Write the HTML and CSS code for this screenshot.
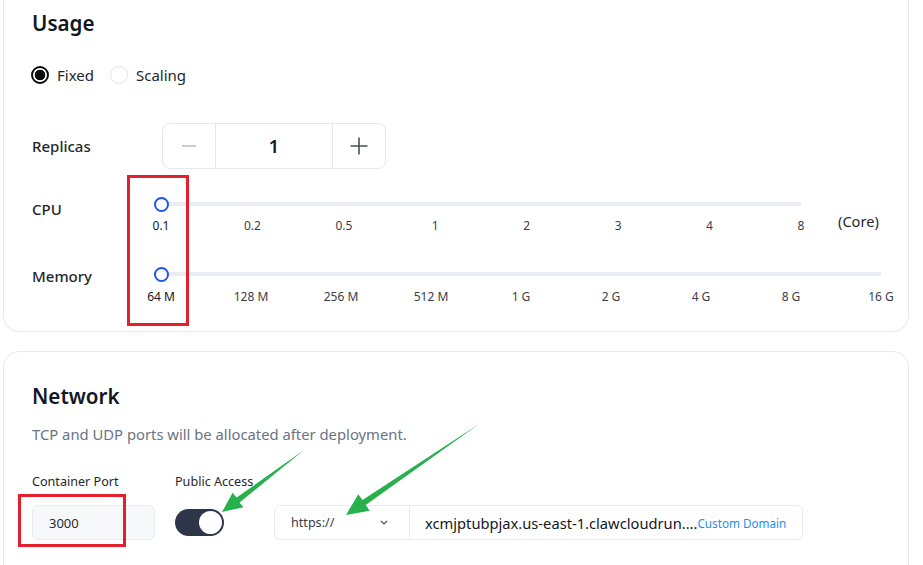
FILE: index.html
```html
<!DOCTYPE html>
<html lang="en">
<head>
<meta charset="utf-8">
<title>Usage &amp; Network</title>
<link rel="stylesheet" href="styles.css">
</head>
<body>
<div class="page">
  <section class="card card--cut">
    <h2 class="card-title">Usage</h2>
    <div class="radios">
      <label class="radio radio--on"><span class="radio-dot"></span><span class="radio-text">Fixed</span></label>
      <label class="radio"><span class="radio-dot"></span><span class="radio-text">Scaling</span></label>
    </div>

    <div class="row row--replicas">
      <span class="row-label">Replicas</span>
      <div class="stepper">
        <span class="step step--minus"><svg width="16" height="4" viewBox="0 0 16 4"><line x1="1" y1="2" x2="15" y2="2" stroke="#c9cdd3" stroke-width="2"/></svg></span>
        <span class="step-value">1</span>
        <span class="step step--plus"><svg width="18" height="18" viewBox="0 0 18 18"><path d="M0.5 9H17.5M9 0.5V17.5" stroke="#4b5058" stroke-width="1.6"/></svg></span>
      </div>
    </div>

    <div class="row row--slider">
      <span class="row-label row-label--cpu">CPU</span>
      <div class="slider slider--cpu">
        <div class="track"><span class="thumb"></span></div>
        <div class="ticks">
          <span class="tick tick--on">0.1</span><span class="tick">0.2</span><span class="tick">0.5</span><span class="tick">1</span><span class="tick">2</span><span class="tick">3</span><span class="tick">4</span><span class="tick">8</span>
        </div>
      </div>
      <span class="unit">(Core)</span>
    </div>

    <div class="row row--slider row--memory">
      <span class="row-label row-label--mem">Memory</span>
      <div class="slider slider--mem">
        <div class="track"><span class="thumb"></span></div>
        <div class="ticks">
          <span class="tick tick--on">64 M</span><span class="tick">128 M</span><span class="tick">256 M</span><span class="tick">512 M</span><span class="tick">1 G</span><span class="tick">2 G</span><span class="tick">4 G</span><span class="tick">8 G</span><span class="tick">16 G</span>
        </div>
      </div>
    </div>
  </section>

  <section class="card card--network">
    <h2 class="card-title">Network</h2>
    <p class="card-desc">TCP and UDP ports will be allocated after deployment.</p>
    <div class="net-grid">
      <span class="field-label">Container Port</span>
      <span class="field-label">Public Access</span>
      <span></span>
      <div class="port-input">3000</div>
      <div class="toggle-cell"><span class="toggle"><span class="knob"></span></span></div>
      <div class="url-group">
        <div class="proto">
          <span>https://</span>
          <svg width="8" height="5" viewBox="0 0 8 5"><path d="M1 1L4 4L7 1" fill="none" stroke="#4b5563" stroke-width="1.2"/></svg>
        </div>
        <div class="domain">
          <span class="domain-text">xcmjptubpjax.us-east-1.clawcloudrun....</span><span class="domain-link">Custom Domain</span>
        </div>
      </div>
    </div>
  </section>

  <span class="annot annot--cpu"></span>
  <span class="annot annot--port"></span>

  <svg class="arrows" width="923" height="565" viewBox="0 0 923 565">
    <polygon fill="#27b04b" points="222,512 232.6,492.8 236.6,497.6 304,450 239.6,502.4 243.4,507.2"/>
    <polygon fill="#27b04b" points="346,515 358.3,494.3 362.5,499.9 479,424 365.7,505 369.7,510.7"/>
  </svg>
</div>
</body>
</html>
```

FILE: styles.css
```css
* { box-sizing: border-box; }

html, body {
  margin: 0;
  background: #ffffff;
}

body {
  font-family: "Noto Sans", "Open Sans", sans-serif;
  color: #24282d;
}

.page {
  position: relative;
  width: 923px;
  height: 565px;
  overflow: hidden;
  padding-left: 3px;
}

.card {
  width: 906px;
  border: 1px solid #e6e8ec;
  border-radius: 16px;
  background: #fff;
  padding-left: 28px;
}

.card--cut {
  border-top: 0;
  border-radius: 0 0 16px 16px;
  padding-top: 9px;
  padding-bottom: 26px;
}

.card-title {
  margin: 0;
  font-size: 20.6px;
  line-height: 28px;
  font-weight: 600;
  color: #111824;
}

/* radios */
.radios {
  display: flex;
  align-items: center;
  margin-top: 28px;
  height: 20px;
}

.radio {
  display: flex;
  align-items: center;
  margin-right: 17px;
}

.radio-dot {
  width: 18px;
  height: 18px;
  border-radius: 50%;
  border: 1px solid #e1e4ea;
  background: #fff;
  margin-right: 8px;
  margin-left: -1px;
}

.radio--on .radio-dot {
  border: 2px solid #0b0b0b;
  background: radial-gradient(circle, #0b0b0b 0 5px, #fff 5.6px);
}

.radio-text {
  font-size: 15px;
  line-height: 20px;
  color: #24282d;
}

/* rows */
.row {
  display: flex;
}

.row-label {
  width: 130px;
  flex: none;
  font-size: 15px;
  line-height: 20px;
  font-weight: 500;
  color: #24282d;
}

.row--replicas {
  margin-top: 38px;
  align-items: center;
}

.stepper {
  display: flex;
  width: 224px;
  height: 46px;
  border: 1px solid #e4e7ec;
  border-radius: 8px;
}

.step {
  width: 53px;
  flex: none;
  display: flex;
  align-items: center;
  justify-content: center;
}

.step--minus { border-right: 1px solid #e4e7ec; }
.step--plus { border-left: 1px solid #e4e7ec; }

.step-value {
  flex: 1;
  display: flex;
  align-items: center;
  justify-content: center;
  font-size: 18px;
  font-weight: 600;
  color: #111824;
}

/* sliders */
.row--slider {
  margin-top: 28px;
  align-items: flex-start;
}

.row--memory { margin-top: 33px; }

.row-label--cpu { width: 129px; margin-top: 2px; }
.row-label--mem { width: 129px; margin-top: -1px; }

.slider--cpu { width: 640px; }
.slider--mem { width: 720px; }

.track {
  position: relative;
  height: 14px;
  background: linear-gradient(#eaedf3, #eaedf3) no-repeat 0 50% / 100% 4px;
  border-radius: 2px;
}

.thumb {
  position: absolute;
  left: -7px;
  top: -0.5px;
  width: 15px;
  height: 15px;
  border-radius: 50%;
  border: 2.5px solid #1f55f3;
  background: #fff;
}

.ticks {
  display: flex;
  justify-content: space-between;
  margin-top: 7px;
}

.tick {
  width: 0;
  display: flex;
  justify-content: center;
  white-space: nowrap;
  font-size: 12px;
  line-height: 16px;
  color: #3b4048;
}

.tick--on { color: #15181d; }

.slider--mem .ticks { margin-top: 8px; }

.unit {
  margin-left: 37px;
  margin-top: 14px;
  font-size: 14.6px;
  line-height: 20px;
  color: #24282d;
}

/* network card */
.card--network {
  margin-top: 19px;
  padding-top: 30px;
  height: 240px;
}

.card-desc {
  margin: 14px 0 0;
  font-size: 14.8px;
  line-height: 20px;
  color: #6b7384;
}

.net-grid {
  display: grid;
  grid-template-columns: 123px 79px 529px;
  column-gap: 20px;
  row-gap: 14px;
  margin-top: 29px;
}

.field-label {
  font-size: 12.6px;
  line-height: 18px;
  white-space: nowrap;
  color: #24282d;
}

.port-input {
  height: 35px;
  border: 1px solid #e8ebef;
  border-radius: 6px;
  background: #f7f8fa;
  padding-left: 16px;
  display: flex;
  align-items: center;
  font-size: 13px;
  color: #24282d;
}

.toggle-cell {
  display: flex;
  align-items: center;
}

.toggle {
  display: flex;
  justify-content: flex-end;
  width: 49px;
  height: 27px;
  padding: 2px;
  border-radius: 14px;
  background: #2d3648;
}

.knob {
  width: 23px;
  height: 23px;
  border-radius: 50%;
  background: #fff;
}

.url-group {
  display: flex;
  height: 35px;
  border: 1px solid #e8ebef;
  border-radius: 6px;
}

.proto {
  width: 135px;
  flex: none;
  display: flex;
  align-items: center;
  justify-content: space-between;
  padding: 0 21px 0 16px;
  border-right: 1px solid #e8ebef;
  font-size: 12.6px;
  color: #3b4048;
}

.domain {
  flex: 1;
  display: flex;
  align-items: center;
  padding-left: 15px;
  white-space: nowrap;
}

.domain-text {
  font-size: 14.7px;
  color: #15181d;
}

.domain-link {
  font-size: 11.7px;
  color: #1f8ef1;
}

/* annotations */
.annot {
  position: absolute;
  border: 3px solid #e5202e;
}

.annot--cpu {
  left: 127px;
  top: 175px;
  width: 62px;
  height: 151px;
}

.annot--port {
  left: 18px;
  top: 494px;
  width: 108px;
  height: 53px;
}

.arrows {
  position: absolute;
  left: 0;
  top: 0;
  pointer-events: none;
}
```
